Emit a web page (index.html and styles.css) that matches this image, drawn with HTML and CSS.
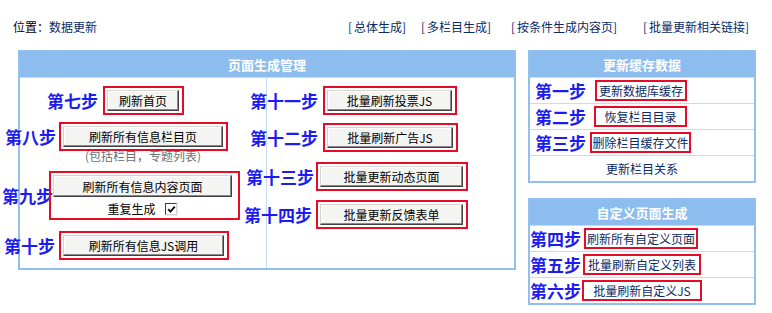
FILE: index.html
```html
<!DOCTYPE html>
<html lang="zh-CN">
<head>
<meta charset="utf-8">
<title>数据更新</title>
<link rel="stylesheet" href="styles.css">
</head>
<body>
<div class="topbar">
  <span class="loc">位置：<a class="nav">数据更新</a></span>
  <a class="toplink tl1"><span class="bk">[</span>总体生成<span class="bk">]</span></a>
  <a class="toplink tl2"><span class="bk">[</span>多栏目生成<span class="bk">]</span></a>
  <a class="toplink tl3"><span class="bk">[</span>按条件生成内容页<span class="bk">]</span></a>
  <a class="toplink tl4"><span class="bk">[</span>批量更新相关链接<span class="bk">]</span></a>
</div>

<div class="main">
  <section class="panel big">
    <div class="phead">页面生成管理</div>
    <div class="pbody">
      <div class="col col-left">
        <div class="step s7"><span class="lbl">第七步</span><span class="hl"><button class="btn b72">刷新首页</button></span></div>
        <div class="step s8"><span class="lbl">第八步</span><span class="hl"><button class="btn b160">刷新所有信息栏目页</button></span></div>
        <div class="note">(包括栏目，专题列表)</div>
        <div class="step s9"><span class="lbl">第九步</span><span class="hl hl-stack"><button class="btn b179 tall">刷新所有信息内容页面</button><span class="repeat"><span>重复生成</span><span class="chkwrap"><span class="chk"><svg width="9" height="9" viewBox="0 0 9 9"><path d="M1.2 4.2 L3.4 6.6 L7.8 1.6" fill="none" stroke="#111" stroke-width="1.9"/></svg></span></span></span></span></div>
        <div class="step s10"><span class="lbl">第十步</span><span class="hl"><button class="btn b161">刷新所有信息JS调用</button></span></div>
      </div>
      <div class="col col-right">
        <div class="step s11"><span class="lbl">第十一步</span><span class="hl"><button class="btn b125">批量刷新投票JS</button></span></div>
        <div class="step s12"><span class="lbl">第十二步</span><span class="hl"><button class="btn b126">批量刷新广告JS</button></span></div>
        <div class="step s13"><span class="lbl">第十三步</span><span class="hl"><button class="btn b143">批量更新动态页面</button></span></div>
        <div class="step s14"><span class="lbl">第十四步</span><span class="hl"><button class="btn b143">批量更新反馈表单</button></span></div>
      </div>
    </div>
  </section>

  <div class="side">
    <section class="panel small">
      <div class="phead">更新缓存数据</div>
      <div class="row pad"><span class="lbl">第一步</span><a class="rbox r1">更新数据库缓存</a></div>
      <div class="row pad"><span class="lbl">第二步</span><a class="rbox r2">恢复栏目目录</a></div>
      <div class="row pad"><span class="lbl">第三步</span><a class="rbox r3">删除栏目缓存文件</a></div>
      <div class="row center"><a class="plain">更新栏目关系</a></div>
    </section>
    <section class="panel small">
      <div class="phead">自定义页面生成</div>
      <div class="row"><span class="lbl">第四步</span><a class="rbox r4">刷新所有自定义页面</a></div>
      <div class="row"><span class="lbl">第五步</span><a class="rbox r5">批量刷新自定义列表</a></div>
      <div class="row"><span class="lbl">第六步</span><a class="rbox r6">批量刷新自定义JS</a></div>
    </section>
  </div>
</div>
</body>
</html>
```

FILE: styles.css
```css
html, body {
  margin: 0;
  padding: 0;
  background: #ffffff;
}
body {
  font-family: "Noto Sans CJK SC", "Liberation Sans", sans-serif;
  font-size: 12px;
  color: #000000;
}
a {
  color: #0a2a66;
  text-decoration: none;
}

/* top bar */
.topbar {
  display: flex;
  padding: 20px 0 0 13px;
  height: 14px;
  line-height: 14px;
  white-space: nowrap;
}
.loc {
  width: 84px;
  flex: none;
}
.toplink {
  flex: none;
  display: inline-block;
}
.bk {
  display: inline-block;
  width: 6px;
}
.tl1 { margin-left: 251px; }
.tl2 { margin-left: 13px; }
.tl3 { margin-left: 18px; }
.tl4 { margin-left: 24px; }

/* layout */
.main {
  display: flex;
  align-items: flex-start;
  margin-top: 16px;
  padding-left: 18px;
  gap: 12px;
}
.panel {
  border: 2px solid #93bfee;
  background: #ffffff;
}
.big { width: 494px; }
.side {
  display: flex;
  flex-direction: column;
  gap: 15px;
}
.small { width: 224px; }
.phead {
  height: 25px;
  line-height: 25px;
  background: #8dbdee;
  color: #ffffff;
  font-weight: bold;
  font-size: 13px;
  text-align: center;
}
.pbody {
  display: grid;
  grid-template-columns: 247px 247px;
  border-top: 1px solid #c6dcf5;
  height: 190px;
}
.col {
  box-sizing: border-box;
  min-width: 0;
}
.col-left {
  border-right: 1px solid #c6dcf5;
}

/* steps */
.step {
  display: flex;
  align-items: center;
  white-space: nowrap;
}
.lbl {
  flex: none;
  font-size: 17px;
  font-weight: bold;
  line-height: 20px;
  color: #1c1cf2;
  white-space: nowrap;
}
.hl {
  flex: none;
  display: flex;
  flex-direction: column;
  border: 2px solid #e60c28;
  padding: 2px 3px 2px 2px;
}
.hl-stack {
  padding: 2px 6px 0 2px;
}
.btn {
  box-sizing: border-box;
  height: 21px;
  padding: 0;
  margin: 0;
  font-family: "Noto Sans CJK SC", "Liberation Sans", sans-serif;
  font-size: 12px;
  line-height: 17px;
  color: #000000;
  background: #f4f4f2;
  border: 1px solid;
  border-color: #d6d3cc #404040 #404040 #d6d3cc;
  box-shadow: inset -1px -1px 0 #8a8a8a, inset 1px 1px 0 #ffffff;
  text-align: center;
}
.btn.tall { height: 22px; }
.b72 { width: 72px; }
.b125 { width: 125px; }
.b126 { width: 126px; }
.b143 { width: 143px; }
.b160 { width: 160px; }
.b161 { width: 161px; }
.b179 { width: 179px; }

.s7 { margin-top: 8px; margin-left: 27px; }
.s7 .hl { margin-left: 5px; }
.s8 { margin-top: 7px; margin-left: -15px; }
.s8 .hl { margin-left: 3px; }
.note {
  margin: -1px 0 0 43px;
  width: 160px;
  text-align: center;
  line-height: 12px;
  color: #6e6e6e;
  white-space: nowrap;
}
.s9 { margin-top: 9px; margin-left: -18px; }
.s9 .hl { margin-left: -4px; }
.repeat {
  display: flex;
  justify-content: center;
  align-items: center;
  gap: 9px;
  margin-top: 3px;
  height: 18px;
  line-height: 18px;
}
.chkwrap {
  display: flex;
  align-items: center;
  justify-content: center;
  width: 13px;
  height: 13px;
  background: #ececec;
}
.chk {
  box-sizing: border-box;
  display: flex;
  align-items: center;
  justify-content: center;
  width: 12px;
  height: 12px;
  background: #ffffff;
  border: 1px solid;
  border-color: #3e3e3e #cfcfcf #cfcfcf #3e3e3e;
}
.s10 { margin-top: 11px; margin-left: -16px; }
.s10 .hl { margin-left: 4px; }

.s11 { margin-top: 8px; margin-left: -17px; }
.s11 .hl { margin-left: 5px; }
.s12 { margin-top: 8px; margin-left: -17px; }
.s12 .hl { margin-left: 5px; }
.s13 { margin-top: 10px; margin-left: -21px; }
.s13 .hl { margin-left: 2px; }
.s14 { margin-top: 9px; margin-left: -23px; }
.s14 .hl { margin-left: 4px; }

/* side rows */
.row {
  display: flex;
  align-items: center;
  height: 25px;
  border-top: 1px solid #c6dcf5;
  white-space: nowrap;
}
.row.pad { padding-left: 5px; }
.row.center { justify-content: center; }
.plain { color: #0a2a66; }
.rbox {
  box-sizing: border-box;
  flex: none;
  height: 21px;
  line-height: 17px;
  border: 2px solid #e60c28;
  text-align: center;
  color: #0a2a66;
}
.r1 { width: 92px; margin-left: 9px; }
.r2 { width: 93px; margin-left: 8px; }
.r3 { width: 101px; margin-left: 4px; }
.r4 { width: 114px; margin-left: 3px; }
.r5 { width: 118px; margin-left: 2px; }
.r6 { width: 120px; margin-left: 1px; }
```
